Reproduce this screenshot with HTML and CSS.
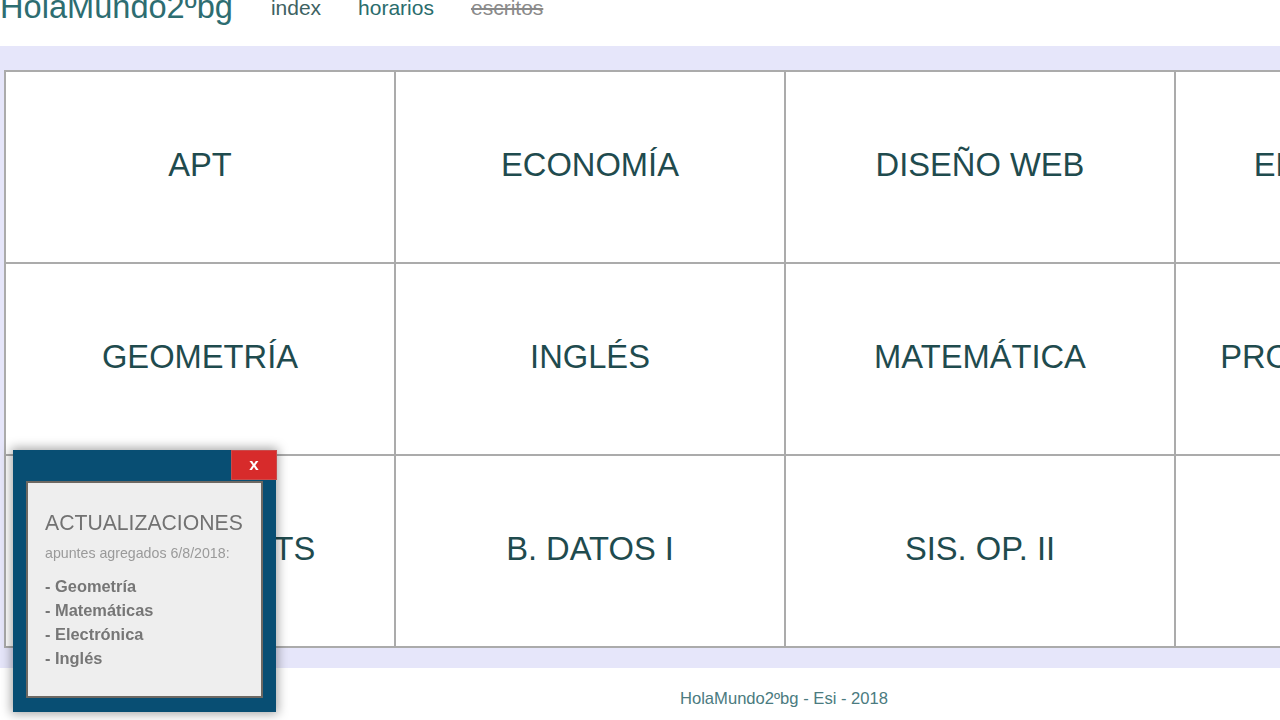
FILE: index.html
```html
<!DOCTYPE html>
<html lang="es">
<head>
<meta charset="utf-8">
<title>HolaMundo2ºbg</title>
<link rel="stylesheet" href="styles.css">
</head>
<body>
<div class="page">
  <header class="topbar">
    <span class="brand">HolaMundo2ºbg</span>
    <nav class="nav">
      <a class="nav-link nav-index" href="#">index</a>
      <a class="nav-link nav-horarios" href="#">horarios</a>
      <a class="nav-link nav-escritos" href="#">escritos</a>
    </nav>
  </header>
  <main class="band">
    <div class="board">
      <div class="cell">APT</div>
      <div class="cell">ECONOMÍA</div>
      <div class="cell">DISEÑO WEB</div>
      <div class="cell">ELECTRÓNICA</div>
      <div class="cell">GEOMETRÍA</div>
      <div class="cell">INGLÉS</div>
      <div class="cell">MATEMÁTICA</div>
      <div class="cell">PROGRAMACIÓN II</div>
      <div class="cell">DIG. CIRCUITS</div>
      <div class="cell">B. DATOS I</div>
      <div class="cell">SIS. OP. II</div>
      <div class="cell">FÍSICA</div>
    </div>
  </main>
  <footer class="footer">HolaMundo2ºbg - Esi - 2018</footer>
</div>

<aside class="popup">
  <button class="popup-close" type="button">x</button>
  <div class="popup-body">
    <h3 class="popup-title">ACTUALIZACIONES</h3>
    <p class="popup-sub">apuntes agregados 6/8/2018:</p>
    <ul class="popup-list">
      <li>- Geometría</li>
      <li>- Matemáticas</li>
      <li>- Electrónica</li>
      <li>- Inglés</li>
    </ul>
  </div>
</aside>
</body>
</html>
```

FILE: styles.css
```css
html {
  overflow: hidden;
}
body {
  margin: 0;
  background: #ffffff;
  font-family: "Liberation Sans", Arial, sans-serif;
}
.page {
  width: 1568px;
}
.topbar {
  height: 46px;
  display: flex;
  align-items: flex-start;
  gap: 37px;
  overflow: hidden;
}
.brand {
  font-size: 32.6px;
  line-height: 33px;
  margin-top: -10px;
  margin-right: 1px;
  color: #2d6d71;
}
.nav {
  display: flex;
  gap: 37px;
  margin-top: -3px;
}
.nav-link {
  font-size: 21px;
  line-height: 21px;
  text-decoration: none;
}
.nav-index { color: #3e6262; }
.nav-horarios { color: #2a6c6c; }
.nav-escritos {
  color: #8a8a8a;
  text-decoration: line-through;
}
.band {
  background: #e6e6fa;
  padding: 24px 4px 20px 4px;
}
.board {
  display: grid;
  grid-template-columns: repeat(4, 390px);
  grid-auto-rows: 192px;
  border-top: 2px solid #ababab;
  border-left: 2px solid #ababab;
  background: #ffffff;
}
.cell {
  border-right: 2px solid #ababab;
  border-bottom: 2px solid #ababab;
  padding-bottom: 4px;
  display: flex;
  align-items: center;
  justify-content: center;
  font-size: 32.7px;
  color: #1f4b4e;
  white-space: nowrap;
}
.footer {
  height: 52px;
  box-sizing: border-box;
  padding-top: 21px;
  text-align: center;
  font-size: 16.6px;
  line-height: 20px;
  color: #4b7b80;
}
.popup {
  position: fixed;
  left: 13px;
  top: 450px;
  width: 263px;
  height: 262px;
  box-sizing: border-box;
  padding: 31px 13px 14px 13px;
  background: #084e73;
  box-shadow: 0 0 10px 2px rgba(0, 0, 0, 0.35);
}
.popup-close {
  position: absolute;
  top: 0;
  right: -1px;
  width: 46px;
  height: 30px;
  margin: 0;
  padding: 0;
  border: 1px solid #c94a4a;
  background: #d72b2b;
  color: #ffffff;
  font-family: "Liberation Sans", Arial, sans-serif;
  font-weight: bold;
  font-size: 17px;
  line-height: 26px;
}
.popup-body {
  height: 100%;
  box-sizing: border-box;
  border: 2px solid #6d6862;
  background: #eeeeee;
  padding: 28px 17px 0 17px;
}
.popup-title {
  margin: 0;
  font-size: 21.2px;
  line-height: 24px;
  font-weight: normal;
  color: #727272;
}
.popup-sub {
  margin: 9px 0 0 0;
  font-size: 14.2px;
  line-height: 18px;
  color: #9a9a9a;
}
.popup-list {
  list-style: none;
  margin: 12px 0 0 0;
  padding: 0;
}
.popup-list li {
  font-size: 16.4px;
  line-height: 24px;
  font-weight: bold;
  color: #767676;
}
```
